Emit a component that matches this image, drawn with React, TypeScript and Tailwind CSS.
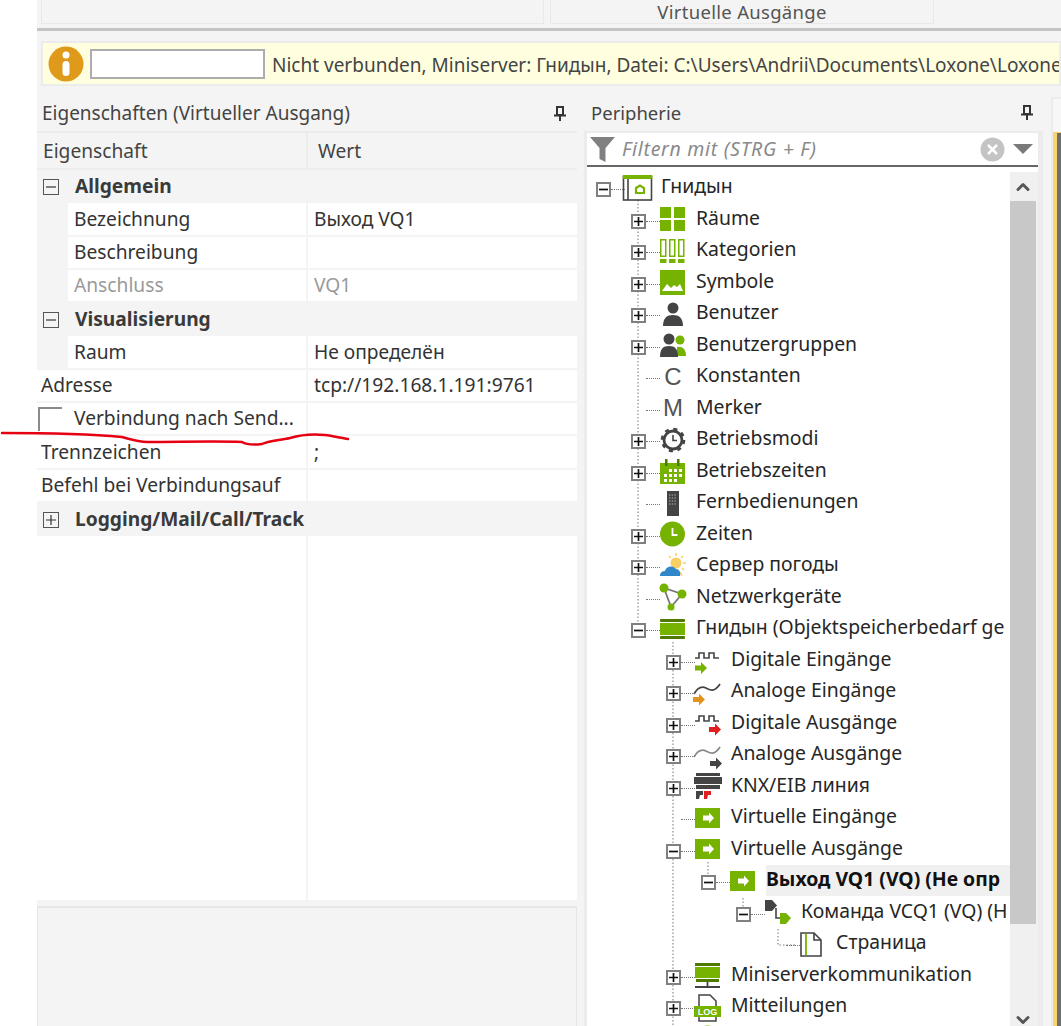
import React from 'react';
import { ChevronUp, ChevronDown } from 'lucide-react';

const GREEN = '#76b300';
const DARK = '#444444';

// Small helper glyphs used by several tree icons
const Pulse = () => (
  <path d="M0 11h4V6h5v5h5V6h5v5h5" fill="none" stroke={DARK} strokeWidth="1.600" />
);
const Wave = ({ color = DARK }: { color?: string }) => (
  <path d="M-1 15C3 8 7 7 11 9S19 14 25 5" fill="none" stroke={color} strokeWidth="1.800" />
);
const Arrow = ({ x, y, color }: { x: number; y: number; color: string }) => (
  <path d={`M${x} ${y + 3}h6v-3.500l6 6-6 6v-3.500h-6z`} fill={color} />
);

const VirtualIcon = () => (
  <>
    <rect x="0" y="3" width="25" height="20" fill={GREEN} />
    <path d="M8 10.500h6V7.500l5 5.500-5 5.500v-3H8z" fill="#fff" />
  </>
);

const icons: Record<string, React.ReactNode> = {
  root: (
    <>
      <rect x="-1.500" y="2" width="28" height="23" fill="#fff" stroke={DARK} strokeWidth="1.600" />
      <rect x="-2.300" y="0" width="29.600" height="4" fill={GREEN} />
      <path d="M3 4v21" stroke={DARK} strokeWidth="1.600" />
      <path d="M11 13l4-2.500 4 2.500v5h-8z" fill="none" stroke={GREEN} strokeWidth="2.200" />
    </>
  ),
  rooms: (
    <>
      <rect x="0" y="1" width="11" height="11" fill={GREEN} />
      <rect x="14" y="1" width="11" height="11" fill={GREEN} />
      <rect x="0" y="14" width="11" height="11" fill={GREEN} />
      <rect x="14" y="14" width="11" height="11" fill={GREEN} />
    </>
  ),
  categories: (
    <g fill={GREEN}>
      <path d="M0 1h6.500v18H0zM1.500 2.500v15H5v-15z" fillRule="evenodd" />
      <path d="M9 1h6.500v18H9zM10.500 2.500v15H14v-15z" fillRule="evenodd" />
      <path d="M18 1h6.500v18H18zM19.500 2.500v15H23v-15z" fillRule="evenodd" />
      <rect x="0" y="21" width="6.500" height="4" />
      <rect x="9" y="21" width="6.500" height="4" />
      <rect x="18" y="21" width="6.500" height="4" />
    </g>
  ),
  symbols: (
    <>
      <rect x="0" y="1" width="25" height="25" fill={GREEN} />
      <path d="M2 22l5-7 4 4 3-3 3 2 3-3 3 7z" fill="#fff" />
    </>
  ),
  user: (
    <>
      <circle cx="13" cy="7" r="5.500" fill={DARK} />
      <path d="M3 25c0-8 4-11 10-11s10 3 10 11z" fill={DARK} />
    </>
  ),
  group: (
    <>
      <circle cx="20" cy="8" r="4.500" fill={GREEN} />
      <path d="M17 24v-9c5-1 9 2 9 9z" fill={GREEN} />
      <circle cx="9" cy="7" r="5.500" fill={DARK} />
      <path d="M0 25c0-8 3-11 9-11s9 3 9 11z" fill={DARK} />
    </>
  ),
  modes: (
    <>
      <circle cx="13" cy="13" r="9" fill="#fff" stroke={DARK} strokeWidth="2.800" />
      <circle cx="13" cy="13" r="11" fill="none" stroke={DARK} strokeWidth="2.600" strokeDasharray="4 4.640" />
      <path d="M13 8v5.500h4" fill="none" stroke={DARK} strokeWidth="1.600" />
    </>
  ),
  calendar: (
    <>
      <rect x="0" y="5" width="25" height="21" fill={GREEN} />
      <rect x="5" y="1" width="2.500" height="7" fill="#4f7a00" />
      <rect x="17" y="1" width="2.500" height="7" fill="#4f7a00" />
      <g fill="#fff">
        <rect x="9" y="11" width="3" height="3" />
        <rect x="14" y="11" width="3" height="3" />
        <rect x="19" y="11" width="3" height="3" />
        <rect x="4" y="16" width="3" height="3" />
        <rect x="9" y="16" width="3" height="3" />
        <rect x="14" y="16" width="3" height="3" />
        <rect x="19" y="16" width="3" height="3" />
        <rect x="4" y="21" width="3" height="3" />
        <rect x="9" y="21" width="3" height="3" />
        <rect x="14" y="21" width="3" height="3" />
      </g>
    </>
  ),
  remote: (
    <>
      <rect x="7" y="1" width="12" height="25" fill={DARK} />
      <path d="M9 5h8M9 8h8M9 11h8M9 14h8" stroke="#8a8a8a" strokeWidth="1.400" strokeDasharray="1.500 1.200" />
    </>
  ),
  clock: (
    <>
      <circle cx="12.500" cy="13" r="12.500" fill={GREEN} />
      <path d="M12.500 7v7h5" fill="none" stroke="#fff" strokeWidth="1.800" />
    </>
  ),
  weather: (
    <>
      <circle cx="16" cy="10" r="5.500" fill="#f7cf63" />
      <path d="M16 0v3M23 3l-2 2M26 10h-3M24 17l-2-2M9 3l2 2M22 23l-2-4" stroke="#f7cf63" strokeWidth="1.500" />
      <path d="M0 23c0-4 3-5 5-5 1-5 8-6 11-2 3 0 5 3 4 7z" fill="#2f86c8" />
    </>
  ),
  network: (
    <>
      <path d="M4 4l18 6-11 13z" fill="none" stroke="#777" strokeWidth="1.800" />
      <circle cx="4" cy="4" r="4.500" fill={GREEN} />
      <circle cx="22" cy="10" r="4.500" fill={GREEN} />
      <circle cx="11" cy="23" r="3.500" fill={GREEN} />
    </>
  ),
  server: (
    <>
      <rect x="0" y="3" width="25" height="3" rx="1" fill="#4f7a00" />
      <rect x="0" y="7" width="25" height="12" fill={GREEN} />
      <rect x="0" y="20" width="25" height="3" rx="1" fill="#4f7a00" />
    </>
  ),
  digitalIn: (
    <>
      <Pulse />
      <Arrow x={0} y={15.500} color={GREEN} />
    </>
  ),
  analogIn: (
    <>
      <Wave />
      <Arrow x={-2} y={15} color="#e0941f" />
    </>
  ),
  digitalOut: (
    <>
      <Pulse />
      <Arrow x={14} y={14} color="#e02020" />
    </>
  ),
  analogOut: (
    <>
      <Wave color="#888" />
      <Arrow x={15} y={16} color={DARK} />
    </>
  ),
  knx: (
    <>
      <rect x="1" y="0" width="24" height="3" fill={DARK} />
      <rect x="-1" y="4" width="28" height="7" fill={DARK} />
      <rect x="1" y="12" width="24" height="4" fill={DARK} />
      <path d="M1 18h7v4H5l-1 4H1z" fill={DARK} />
      <path d="M9 18h7v4h-3l-1 4H9z" fill="#e02020" />
    </>
  ),
  virtual: <VirtualIcon />,
  command: (
    <>
      <path d="M0 1h7l5 5.500-5 5.500H0z" fill={DARK} />
      <path d="M11 9v10h5" fill="none" stroke={DARK} strokeWidth="1.600" />
      <path d="M15 14h6l5 5-5 6h-6z" fill={GREEN} />
    </>
  ),
  page: (
    <>
      <path d="M1 2h13l7 7v16H1z" fill="#fff" stroke={DARK} strokeWidth="1.600" />
      <path d="M14 2v7h7" fill="none" stroke={DARK} strokeWidth="1.600" />
      <path d="M6 3v21" stroke={GREEN} strokeWidth="1.800" />
    </>
  ),
  comm: (
    <>
      <rect x="0" y="1" width="25" height="3" fill="#4f7a00" />
      <rect x="0" y="5" width="25" height="11" fill={GREEN} />
      <rect x="1" y="17" width="23" height="3" fill="#4f7a00" />
      <path d="M12.500 20v4M0 25h25" stroke={DARK} strokeWidth="1.800" />
    </>
  ),
  log: (
    <>
      <path d="M4 1h11l6 6v20H4z" fill="#fff" stroke={DARK} strokeWidth="1.500" />
      <rect x="-1" y="12" width="27" height="11" fill={GREEN} />
      <text x="12.500" y="21" textAnchor="middle" fontSize="9" fontWeight="700" fill="#fff" fontFamily="Liberation Sans, sans-serif">LOG</text>
    </>
  ),
  partial: <circle cx="12.500" cy="13" r="12.500" fill={GREEN} />,
};

type TreeRow = {
  level: number;
  label: string;
  icon?: string;
  glyph?: string;
  box?: 'plus' | 'minus';
  bold?: boolean;
};

const treeRows: TreeRow[] = [
  { level: 0, label: 'Гнидын', icon: 'root', box: 'minus' },
  { level: 1, label: 'Räume', icon: 'rooms', box: 'plus' },
  { level: 1, label: 'Kategorien', icon: 'categories', box: 'plus' },
  { level: 1, label: 'Symbole', icon: 'symbols', box: 'plus' },
  { level: 1, label: 'Benutzer', icon: 'user', box: 'plus' },
  { level: 1, label: 'Benutzergruppen', icon: 'group', box: 'plus' },
  { level: 1, label: 'Konstanten', glyph: 'C' },
  { level: 1, label: 'Merker', glyph: 'M' },
  { level: 1, label: 'Betriebsmodi', icon: 'modes', box: 'plus' },
  { level: 1, label: 'Betriebszeiten', icon: 'calendar', box: 'plus' },
  { level: 1, label: 'Fernbedienungen', icon: 'remote' },
  { level: 1, label: 'Zeiten', icon: 'clock', box: 'plus' },
  { level: 1, label: 'Сервер погоды', icon: 'weather', box: 'plus' },
  { level: 1, label: 'Netzwerkgeräte', icon: 'network' },
  { level: 1, label: 'Гнидын (Objektspeicherbedarf ge', icon: 'server', box: 'minus' },
  { level: 2, label: 'Digitale Eingänge', icon: 'digitalIn', box: 'plus' },
  { level: 2, label: 'Analoge Eingänge', icon: 'analogIn', box: 'plus' },
  { level: 2, label: 'Digitale Ausgänge', icon: 'digitalOut', box: 'plus' },
  { level: 2, label: 'Analoge Ausgänge', icon: 'analogOut', box: 'plus' },
  { level: 2, label: 'KNX/EIB линия', icon: 'knx', box: 'plus' },
  { level: 2, label: 'Virtuelle Eingänge', icon: 'virtual' },
  { level: 2, label: 'Virtuelle Ausgänge', icon: 'virtual', box: 'minus' },
  { level: 3, label: 'Выход VQ1 (VQ) (Не опр', icon: 'virtual', box: 'minus', bold: true },
  { level: 4, label: 'Команда VCQ1 (VQ) (Н', icon: 'command', box: 'minus' },
  { level: 5, label: 'Страница', icon: 'page' },
  { level: 2, label: 'Miniserverkommunikation', icon: 'comm', box: 'plus' },
  { level: 2, label: 'Mitteilungen', icon: 'log', box: 'plus' },
  { level: 2, label: '', icon: 'partial', box: 'plus' },
];

const PinIcon = () => (
  <svg width="12" height="15" viewBox="0 0 12 15">
    <path d="M3 1h6v8H3z" fill="none" stroke="#333" strokeWidth="2" />
    <path d="M0 9.500h12M6 10v5" stroke="#333" strokeWidth="2" />
  </svg>
);

const GridBox = ({ plus }: { plus?: boolean }) => (
  <span className="flex h-[16px] w-[16px] shrink-0 items-center justify-center border border-[#555555]">
    <svg width="10" height="10" viewBox="0 0 10 10">
      <path d={plus ? 'M0 5h10M5 0v10' : 'M0 5h10'} stroke="#333" strokeWidth="1.200" />
    </svg>
  </span>
);

const GroupRow = ({ label, plus }: { label: string; plus?: boolean }) => (
  <div className="flex h-[33.3px] shrink-0 items-center whitespace-nowrap bg-[#f4f4f4] pl-[6px] font-bold text-[#3a3a3a]">
    <GridBox plus={plus} />
    <span className="ml-[16px]">{label}</span>
  </div>
);

const PropRow = ({ label, value, muted }: { label: string; value?: string; muted?: boolean }) => (
  <div className="flex h-[33.3px] shrink-0 bg-[#f4f4f4] pl-[31px]">
    <div className={`flex flex-1 border-b-2 border-[#f4f4f4] bg-white ${muted ? 'text-[#9a9a9a]' : 'text-[#333333]'}`}>
      <div className="flex w-[240px] items-center border-r-2 border-[#f4f4f4] pl-[6px]">{label}</div>
      <div className="flex flex-1 items-center pl-[6px]">{value}</div>
    </div>
  </div>
);

const TopRow = ({ label, value, check }: { label: string; value?: string; check?: boolean }) => (
  <div className="flex h-[33.3px] shrink-0 border-b-2 border-[#f4f4f4] bg-white text-[#333333]">
    <div className="flex w-[271px] items-center overflow-hidden whitespace-nowrap border-r-2 border-[#f4f4f4] pl-[4px]">
      {check && <span className="-ml-[3px] mr-[12px] h-[24px] w-[24px] shrink-0 border-l-2 border-t-2 border-[#8a8a8a]" />}
      {label}
    </div>
    <div className="flex flex-1 items-center pl-[6px]">{value}</div>
  </div>
);

const TreeItem = ({ row }: { row: TreeRow }) => (
  <div
    className="relative flex h-[31.5px] items-center whitespace-nowrap text-[19.4px] text-[#262626]"
    style={{ paddingLeft: 9 + row.level * 35 }}
  >
    {row.box ? (
      <span className="relative top-[2px] flex h-[15px] w-[15px] shrink-0 items-center justify-center border-2 border-[#808080] bg-white">
        <svg width="9" height="9" viewBox="0 0 9 9">
          <path d={row.box === 'plus' ? 'M0 4.500h9M4.500 0v9' : 'M0 4.500h9'} stroke="#111" strokeWidth="1.700" />
        </svg>
      </span>
    ) : (
      <span className="w-[15px] shrink-0" />
    )}
    <span className="relative top-[2px] w-[14px] shrink-0 border-t border-dotted border-[#777777]" />
    <span className="flex h-[26px] w-[26px] shrink-0 items-center justify-center">
      {row.glyph ? (
        <span className="font-['Liberation_Sans',sans-serif] text-[24px] text-[#555555]">{row.glyph}</span>
      ) : (
        <svg width="26" height="26" viewBox="0 0 26 26" className="overflow-visible">
          {icons[row.icon ?? '']}
        </svg>
      )}
    </span>
    <span className={`ml-[10px] h-[31px] flex-1 leading-[27px] ${row.bold ? 'bg-[#f0f0f0] font-bold text-[#111111]' : ''}`}>
      {row.label}
    </span>
  </div>
);

export default function App() {
  return (
    <div className="relative flex h-[1026px] w-[1061px] overflow-hidden bg-white font-['Noto_Sans',sans-serif] text-[19.2px]">
      <div className="w-[37px] shrink-0" />
      <div className="flex min-w-0 flex-1 flex-col bg-[#f4f4f4]">
        {/* Top tab strip */}
        <div className="flex h-[28px] shrink-0 pl-[4px]">
          <div className="mb-[4px] w-[503px] border-b border-r border-l border-[#e9e9e9]" />
          <div className="mb-[4px] ml-[6px] flex w-[384px] items-center justify-center border-b border-r border-l border-[#e9e9e9] text-[18.5px] tracking-[0.3px] text-[#555555]">
            Virtuelle Ausgänge
          </div>
        </div>
        <div className="h-[3px] shrink-0 bg-[#c4c4c4]" />

        {/* Status bar */}
        <div className="ml-[4px] mt-[10px] flex h-[45px] shrink-0 items-center overflow-hidden whitespace-nowrap border-2 border-[#ececec] bg-[#ffffe0] pl-[5px]">
          <svg width="36" height="36" viewBox="0 0 36 36" className="shrink-0">
            <circle cx="18" cy="18" r="17.500" fill="#df9a1b" />
            <circle cx="18" cy="9" r="3.500" fill="#fff" />
            <rect x="14.500" y="15" width="7" height="15" rx="3.500" fill="#fff" />
          </svg>
          <div className="ml-[6px] h-[30px] w-[175px] shrink-0 border-2 border-[#adadad] bg-white" />
          <span className="ml-[7px] mt-[4px] text-[19px] text-[#444444]">
            Nicht verbunden, Miniserver: Гнидын, Datei: C:\Users\Andrii\Documents\Loxone\Loxone
          </span>
        </div>

        <div className="flex min-h-0 flex-1">
          {/* Properties panel */}
          <div className="flex w-[540px] shrink-0 flex-col">
            <div className="flex h-[45px] shrink-0 items-center justify-between pl-[5px] pr-[11px] pt-[10px] text-[19px] text-[#444444]">
              <span>Eigenschaften (Virtueller Ausgang)</span>
              <PinIcon />
            </div>
            <div className="flex h-[39px] shrink-0 border-b-2 border-t-2 border-[#ececec] text-[#444444]">
              <div className="flex w-[271px] items-center border-r-2 border-[#ececec] pl-[6px] pt-[1px]">Eigenschaft</div>
              <div className="flex flex-1 items-center pl-[10px] pt-[1px]">Wert</div>
            </div>
            <GroupRow label="Allgemein" />
            <PropRow label="Bezeichnung" value="Выход VQ1" />
            <PropRow label="Beschreibung" />
            <PropRow label="Anschluss" value="VQ1" muted />
            <GroupRow label="Visualisierung" />
            <PropRow label="Raum" value="Не определён" />
            <TopRow label="Adresse" value="tcp://192.168.1.191:9761" />
            <TopRow label="Verbindung nach Send..." check />
            <TopRow label="Trennzeichen" value=";" />
            <TopRow label="Befehl bei Verbindungsauf" />
            <GroupRow label="Logging/Mail/Call/Track" plus />
            <div className="flex flex-1 bg-white">
              <div className="w-[271px] border-r-2 border-[#f4f4f4]" />
            </div>
            <div className="h-[8px] shrink-0 border-b-2 border-[#e6e6e6]" />
            <div className="h-[118px] shrink-0 border-x border-[#e6e6e6]" />
          </div>

          {/* Peripherals panel */}
          <div className="ml-[7px] flex w-[459px] shrink-0 flex-col">
            <div className="flex h-[45px] shrink-0 items-center justify-between pl-[7px] pr-[10px] pt-[8px] text-[18.5px] text-[#444444]">
              <span>Peripherie</span>
              <PinIcon />
            </div>
            <div className="flex min-h-0 flex-1 flex-col border-l-[3px] border-r-[5px] border-t-2 border-[#ececec] bg-white">
              <div className="flex h-[34px] shrink-0 items-center border-b-2 border-[#666666] pl-[3px] pr-[5px]">
                <svg width="25" height="26" viewBox="0 0 25 26" className="shrink-0">
                  <path d="M0 1h25L15.500 12v14l-6-3V12z" fill="#808080" />
                </svg>
                <span className="ml-[7px] flex-1 text-[19.5px] italic tracking-[0.7px] text-[#8a8a8a]">Filtern mit (STRG + F)</span>
                <svg width="25" height="25" viewBox="0 0 25 25" className="shrink-0">
                  <circle cx="12.500" cy="12.500" r="12" fill="#c4c4c4" />
                  <path d="M8 8l9 9M17 8l-9 9" stroke="#fff" strokeWidth="2.500" />
                </svg>
                <svg width="20" height="10" viewBox="0 0 20 10" className="ml-[8px] shrink-0">
                  <path d="M0 0h20L10 10z" fill="#7a7a7a" />
                </svg>
              </div>
              <div className="flex min-h-0 flex-1 pt-[5px]">
                {/* Tree: dotted guides sit under the rows */}
                <div className="relative min-w-0 flex-1 overflow-hidden">
                  <svg className="absolute left-0 top-0 h-full w-full" fill="none" stroke="#777777" strokeDasharray="1.500 2">
                    <path d="M51 28V458" />
                    <path d="M86 470V870" />
                    <path d="M121 690V704" />
                    <path d="M156 726V740" />
                    <path d="M191 757V773H210" />
                  </svg>
                  {treeRows.map((row, i) => (
                    <TreeItem key={i} row={row} />
                  ))}
                </div>
                <div className="flex w-[26px] shrink-0 flex-col items-center bg-[#f0f0f0]">
                  <div className="flex h-[29px] shrink-0 items-center justify-center">
                    <ChevronUp size={20} strokeWidth={3.500} color="#555555" />
                  </div>
                  <div className="h-[723px] w-full shrink-0 bg-[#c8c8c8]" />
                  <div className="-mb-[4px] flex flex-1 items-end justify-center">
                    <ChevronDown size={20} strokeWidth={3.500} color="#555555" />
                  </div>
                </div>
                <div className="w-[2px] shrink-0 bg-[#f0f0f0]" />
              </div>
            </div>
          </div>

          {/* Edge of the drawing area */}
          <div className="ml-[8px] mt-[11px] flex flex-1 flex-col border-l-2 border-t-2 border-[#ececec] bg-[#f7f7f7]">
            <div className="mt-[33px] flex-1 border-l-4 border-t border-[#fbd26f] bg-[#6f6f6f]" />
          </div>
        </div>
      </div>

      {/* Red pen stroke drawn over the screenshot */}
      <svg className="pointer-events-none absolute left-0 top-[425px]" width="360" height="30" viewBox="0 0 360 30">
        <path
          d="M2 8C40 8 90 9 122 12 132 15 140 17 148 17 180 17 215 16 242 17 247 20 254 20 262 19 270 15 282 15 290 13 300 10 315 9 325 10 333 11 341 13 348 14"
          fill="none"
          stroke="#e60012"
          strokeWidth="2.500"
          strokeLinecap="round"
        />
      </svg>
    </div>
  );
}
